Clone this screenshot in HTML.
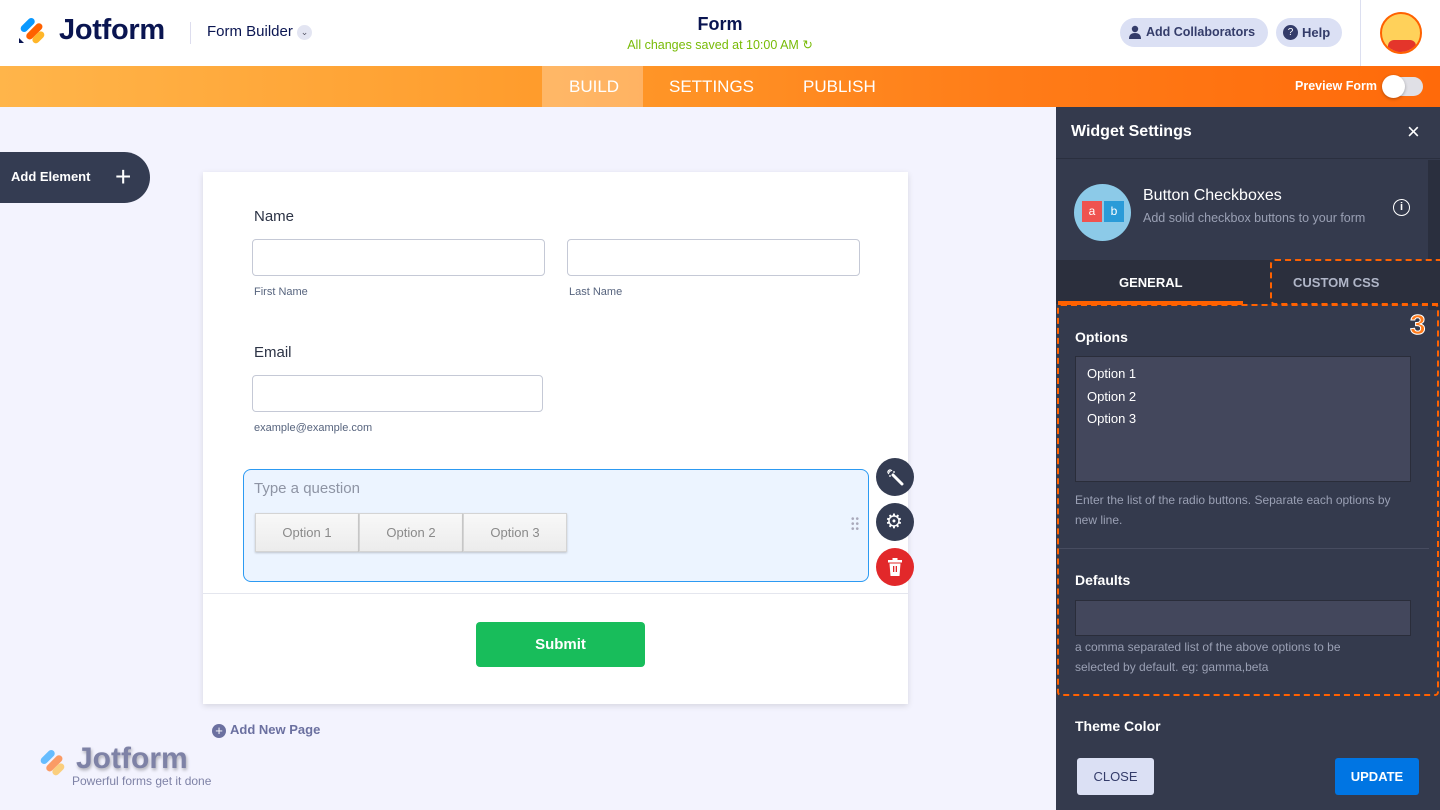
<!DOCTYPE html>
<html><head><meta charset="utf-8"><style>
*{box-sizing:border-box;margin:0;padding:0}
body{width:1440px;height:810px;overflow:hidden;font-family:"Liberation Sans",sans-serif;background:#f3f3fe;position:relative}
.a{position:absolute}
.hdr{left:0;top:0;width:1440px;height:66px;background:#fff}
.bar{left:0;top:66px;width:1440px;height:41px;background:linear-gradient(90deg,#ffb54a 0%,#ff9a2a 40%,#ff7c18 70%,#ff6a0a 100%)}
.nav{color:#fff;font-size:17px;top:77px}
.pill{background:#dbe0f4;border-radius:16px;height:29px;top:18px;color:#343c6a;font-size:13px;font-weight:bold;line-height:29px}
.inp{border:1px solid #c5c9d6;border-radius:4px;background:#fff;height:37px}
.lbl{font-size:15px;color:#2c3345}
.sub{font-size:11px;color:#57647e}
.opt{top:513px;width:104px;height:39px;background:linear-gradient(#f8f8f8,#ececec);border:1px solid #d4d4d4;color:#8a8a8a;font-size:13px;text-align:center;line-height:37px;box-shadow:0 1px 2px rgba(0,0,0,.2)}
.rb{width:38px;height:38px;border-radius:50%;background:#343c52;left:876px}
.panel{left:1056px;top:107px;width:384px;height:703px;background:#343a4d}
.w{color:#fff}
</style></head><body>
<div class="a hdr"></div>
<svg class="a" style="left:18px;top:15px" width="30" height="30" viewBox="0 0 30 30">
<rect x="1" y="7" width="17" height="7" rx="3.5" transform="rotate(-45 9 10)" fill="#0a99ff"/>
<rect x="6" y="13" width="20" height="7" rx="3.5" transform="rotate(-45 16 16)" fill="#ff6100"/>
<rect x="13" y="19" width="14" height="7" rx="3.5" transform="rotate(-45 20 22)" fill="#ffb629"/>
<path d="M1 23 L6 28 L1 28Z" fill="#0a1551"/></svg>
<div class="a" style="left:59px;top:14px;font-size:29px;font-weight:bold;color:#0a1551;letter-spacing:-0.3px">Jotform</div>
<div class="a" style="left:190px;top:22px;width:1px;height:22px;background:#dde"></div>
<div class="a" style="left:207px;top:23px;font-size:15px;color:#0a1551">Form Builder</div>
<div class="a" style="left:297px;top:25px;width:15px;height:15px;border-radius:50%;background:#e3e5f2;font-size:9px;color:#556;text-align:center;line-height:15px">&#8964;</div>
<div class="a" style="left:620px;top:14px;width:200px;text-align:center;font-size:18px;font-weight:bold;color:#0a1551">Form</div>
<div class="a" style="left:600px;top:37px;width:240px;text-align:center;font-size:12.5px;color:#78bb07">All changes saved at 10:00 AM ↻</div>
<div class="a pill" style="left:1120px;width:148px;padding-left:26px;font-size:12.5px">Add Collaborators</div>
<svg class="a" style="left:1128px;top:25px" width="14" height="14" viewBox="0 0 14 14"><circle cx="7" cy="4" r="3.2" fill="#343c6a"/><path d="M1 14 Q1 8 7 8 Q13 8 13 14Z" fill="#343c6a"/></svg>
<div class="a pill" style="left:1276px;width:66px;padding-left:26px">Help</div>
<div class="a" style="left:1283px;top:25px;width:15px;height:15px;border-radius:50%;background:#343c6a;color:#fff;font-size:10px;text-align:center;line-height:15px">?</div>
<div class="a" style="left:1360px;top:0;width:1px;height:66px;background:#dcdff0"></div>
<div class="a" style="left:1380px;top:12px;width:42px;height:42px;border-radius:50%;background:#ffd15a;border:2px solid #ff6100;overflow:hidden"><div style="position:absolute;left:6px;top:26px;width:28px;height:16px;background:#e4352b;border-radius:6px 6px 0 0"></div></div>
<div class="a bar"></div>
<div class="a" style="left:542px;top:66px;width:101px;height:41px;background:rgba(255,255,255,.28)"></div>
<div class="a nav" style="left:569px">BUILD</div>
<div class="a nav" style="left:669px">SETTINGS</div>
<div class="a nav" style="left:803px">PUBLISH</div>
<div class="a" style="left:1295px;top:79px;font-size:12.5px;color:#fff;font-weight:bold">Preview Form</div>
<div class="a" style="left:1383px;top:77px;width:40px;height:19px;border-radius:10px;background:#e0e0e6"></div>
<div class="a" style="left:1382px;top:75px;width:23px;height:23px;border-radius:50%;background:#fff;box-shadow:0 1px 3px rgba(0,0,0,.3)"></div>
<div class="a" style="left:0;top:152px;width:150px;height:51px;background:#343c52;border-radius:0 26px 26px 0"></div>
<div class="a w" style="left:11px;top:169px;font-size:13px;font-weight:bold">Add Element</div>
<div class="a w" style="left:115px;top:163px;font-size:28px;line-height:28px;font-weight:300">+</div>
<div class="a" style="left:203px;top:172px;width:705px;height:532px;background:#fff;box-shadow:0 2px 6px rgba(0,0,0,.12)"></div>
<div class="a lbl" style="left:254px;top:208px">Name</div>
<div class="a inp" style="left:252px;top:239px;width:293px"></div>
<div class="a inp" style="left:567px;top:239px;width:293px"></div>
<div class="a sub" style="left:254px;top:286px">First Name</div>
<div class="a sub" style="left:569px;top:286px">Last Name</div>
<div class="a lbl" style="left:254px;top:344px">Email</div>
<div class="a inp" style="left:252px;top:375px;width:291px"></div>
<div class="a sub" style="left:254px;top:422px">example@example.com</div>
<div class="a" style="left:243px;top:469px;width:626px;height:113px;background:#ecf4ff;border:1px solid #2c9af2;border-radius:8px"></div>
<div class="a" style="left:254px;top:480px;font-size:15px;color:#8e94a4">Type a question</div>
<div class="a opt" style="left:255px">Option 1</div>
<div class="a opt" style="left:359px">Option 2</div>
<div class="a opt" style="left:463px">Option 3</div>
<div class="a" style="left:851px;top:517px;color:#aab;font-size:10px;line-height:5px;letter-spacing:1px">••<br>••<br>••</div>
<div class="a rb" style="top:458px"><svg class="a" style="left:10px;top:10px" width="18" height="18" viewBox="0 0 18 18"><path d="M7 7 L16 16" stroke="#fff" stroke-width="3" stroke-linecap="round"/><path d="M4 1v3M1 4h3M7 4h2M4 7v2M2 2l1 1M6 2l-1 1M2 6l1-1" stroke="#fff" stroke-width="1.2"/></svg></div>
<div class="a rb" style="top:503px"><span class="a w" style="left:9px;top:6px;font-size:20px">⚙</span></div>
<div class="a rb" style="top:548px;background:#e2282a"><svg class="a" style="left:11px;top:10px" width="16" height="18" viewBox="0 0 16 18"><rect x="1" y="2" width="14" height="2.5" fill="#fff"/><rect x="5.5" y="0" width="5" height="2" fill="#fff"/><path d="M2.5 5.5H13.5L12.5 18H3.5Z" fill="#fff"/><rect x="6" y="8" width="1.3" height="6" fill="#e2282a"/><rect x="8.7" y="8" width="1.3" height="6" fill="#e2282a"/></svg></div>
<div class="a" style="left:203px;top:593px;width:705px;height:1px;background:#e4e6ee"></div>
<div class="a" style="left:476px;top:622px;width:169px;height:45px;background:#18bd5b;border-radius:4px;color:#fff;font-size:15px;font-weight:bold;text-align:center;line-height:45px">Submit</div>
<div class="a" style="left:212px;top:724px;width:14px;height:14px;border-radius:50%;background:#6b70a0;color:#fff;font-size:13px;line-height:14px;text-align:center">+</div>
<div class="a" style="left:230px;top:722px;font-size:13px;font-weight:bold;color:#6b70a0">Add New Page</div>
<svg class="a" style="left:38px;top:747px;opacity:.6" width="30" height="30" viewBox="0 0 30 30">
<rect x="1" y="7" width="17" height="7" rx="3.5" transform="rotate(-45 9 10)" fill="#0a99ff"/>
<rect x="6" y="13" width="20" height="7" rx="3.5" transform="rotate(-45 16 16)" fill="#ff6100"/>
<rect x="13" y="19" width="14" height="7" rx="3.5" transform="rotate(-45 20 22)" fill="#ffb629"/></svg>
<div class="a" style="left:76px;top:742px;font-size:30px;font-weight:bold;color:#7e82a6;text-shadow:1px 2px 3px rgba(0,0,0,.3)">Jotform</div>
<div class="a" style="left:72px;top:774px;font-size:12px;color:#7e82a6">Powerful forms get it done</div>
<div class="a panel"></div>
<div class="a" style="left:1056px;top:107px;width:384px;height:52px;background:#343a4d;border-bottom:1px solid #2a2f3f"></div>
<div class="a w" style="left:1071px;top:123px;font-size:16px;font-weight:bold">Widget Settings</div>
<div class="a w" style="left:1407px;top:119px;font-size:22px">×</div>
<div class="a" style="left:1428px;top:160px;width:12px;height:150px;background:#2a2f3e"></div>
<div class="a" style="left:1074px;top:184px;width:57px;height:57px;border-radius:50%;background:#8ccae8"></div>
<div class="a" style="left:1082px;top:201px;width:20px;height:21px;background:#ef5350;color:#fff;font-size:12px;text-align:center;line-height:21px">a</div>
<div class="a" style="left:1104px;top:201px;width:20px;height:21px;background:#2a9bd8;color:#fff;font-size:12px;text-align:center;line-height:21px">b</div>
<div class="a w" style="left:1143px;top:187px;font-size:16px">Button Checkboxes</div>
<div class="a" style="left:1143px;top:211px;font-size:12.5px;color:#9aa0b4">Add solid checkbox buttons to your form</div>
<div class="a" style="left:1393px;top:199px;width:17px;height:17px;border:1.5px solid #fff;border-radius:50%;color:#fff;font-size:11px;text-align:center;line-height:14px;font-weight:bold">i</div>
<div class="a" style="left:1056px;top:260px;width:384px;height:44px;background:#2b2f3d"></div>
<div class="a" style="left:1058px;top:301px;width:185px;height:4px;background:#ff6100"></div>
<div class="a w" style="left:1119px;top:275px;font-size:13px;font-weight:bold">GENERAL</div>
<div class="a" style="left:1293px;top:275px;font-size:13px;font-weight:bold;color:#b0b6c8">CUSTOM CSS</div>
<div class="a" style="left:1270px;top:259px;width:170px;height:46px;border:2px dashed #ff6100;border-radius:5px 0 0 5px;border-right:none"></div>
<div class="a" style="left:1057px;top:304px;width:382px;height:392px;border:2px dashed #ff6100;border-radius:4px"></div>
<div class="a" style="left:1410px;top:309px;font-size:28px;font-weight:bold;-webkit-text-stroke:1px #fff;color:#ff7a1a">3</div>
<div class="a w" style="left:1075px;top:329px;font-size:14px;font-weight:bold">Options</div>
<div class="a" style="left:1075px;top:356px;width:336px;height:126px;background:#43475c;border:1px solid #2a2d3a"></div>
<div class="a w" style="left:1087px;top:363px;font-size:13px;line-height:22.5px">Option 1<br>Option 2<br>Option 3</div>
<div class="a" style="left:1075px;top:491px;font-size:12px;color:#9aa0b4;line-height:19.5px;width:336px">Enter the list of the radio buttons. Separate each options by new line.</div>
<div class="a" style="left:1059px;top:548px;width:370px;height:1px;background:#474c60"></div>
<div class="a w" style="left:1075px;top:572px;font-size:14px;font-weight:bold">Defaults</div>
<div class="a" style="left:1075px;top:600px;width:336px;height:36px;background:#43475c;border:1px solid #2a2d3a"></div>
<div class="a" style="left:1075px;top:638px;font-size:12px;color:#9aa0b4;line-height:19.5px;width:300px">a comma separated list of the above options to be selected by default. eg: gamma,beta</div>
<div class="a w" style="left:1075px;top:718px;font-size:14px;font-weight:bold">Theme Color</div>
<div class="a" style="left:1077px;top:758px;width:77px;height:37px;background:#dbe0f4;border-radius:3px;color:#343c6a;font-size:13px;text-align:center;line-height:37px">CLOSE</div>
<div class="a" style="left:1335px;top:758px;width:84px;height:37px;background:#0075e3;border-radius:3px;color:#fff;font-size:13px;font-weight:bold;text-align:center;line-height:37px">UPDATE</div>
</body></html>
